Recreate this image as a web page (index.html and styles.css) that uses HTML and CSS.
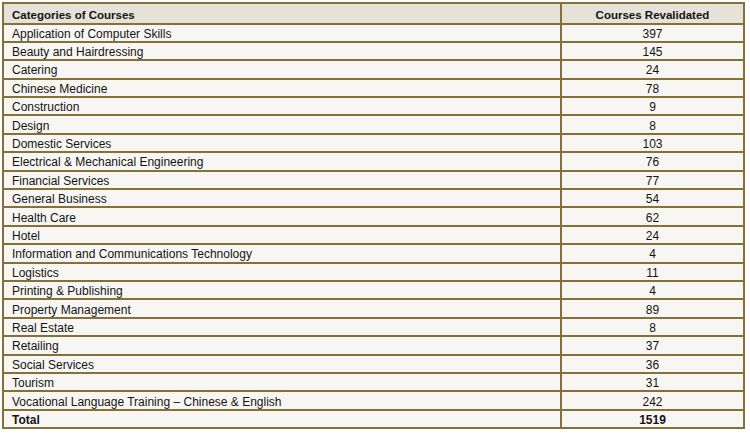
FILE: index.html
```html
<!DOCTYPE html>
<html>
<head>
<meta charset="utf-8">
<link rel="stylesheet" href="styles.css">
</head>
<body>
<table class="courses">
  <thead>
    <tr><th class="cat">Categories of Courses</th><th class="num">Courses Revalidated</th></tr>
  </thead>
  <tbody>
    <tr><td class="cat">Application of Computer Skills</td><td class="num">397</td></tr>
    <tr><td class="cat">Beauty and Hairdressing</td><td class="num">145</td></tr>
    <tr><td class="cat">Catering</td><td class="num">24</td></tr>
    <tr><td class="cat">Chinese Medicine</td><td class="num">78</td></tr>
    <tr><td class="cat">Construction</td><td class="num">9</td></tr>
    <tr><td class="cat">Design</td><td class="num">8</td></tr>
    <tr><td class="cat">Domestic Services</td><td class="num">103</td></tr>
    <tr><td class="cat">Electrical &amp; Mechanical Engineering</td><td class="num">76</td></tr>
    <tr><td class="cat">Financial Services</td><td class="num">77</td></tr>
    <tr><td class="cat">General Business</td><td class="num">54</td></tr>
    <tr><td class="cat">Health Care</td><td class="num">62</td></tr>
    <tr><td class="cat">Hotel</td><td class="num">24</td></tr>
    <tr><td class="cat">Information and Communications Technology</td><td class="num">4</td></tr>
    <tr><td class="cat">Logistics</td><td class="num">11</td></tr>
    <tr><td class="cat">Printing &amp; Publishing</td><td class="num">4</td></tr>
    <tr><td class="cat">Property Management</td><td class="num">89</td></tr>
    <tr><td class="cat">Real Estate</td><td class="num">8</td></tr>
    <tr><td class="cat">Retailing</td><td class="num">37</td></tr>
    <tr><td class="cat">Social Services</td><td class="num">36</td></tr>
    <tr><td class="cat">Tourism</td><td class="num">31</td></tr>
    <tr><td class="cat">Vocational Language Training – Chinese &amp; English</td><td class="num">242</td></tr>
    <tr class="total"><td class="cat">Total</td><td class="num">1519</td></tr>
  </tbody>
</table>
</body>
</html>
```
FILE: styles.css
```css
html, body {
  margin: 0;
  padding: 0;
  background: #ffffff;
}
body {
  padding: 2px 0 0 2px;
  font-family: "Liberation Sans", Arial, sans-serif;
  font-size: 12px;
  color: #141414;
}
.courses {
  border-collapse: collapse;
  width: 743px;
  table-layout: fixed;
  background: #f7f6f2;
}
.courses th,
.courses td {
  border: 2px solid #86703a;
  padding: 3px 8px 0;
  line-height: 13px;
  vertical-align: middle;
}
.courses thead tr {
  height: 20.5px;
}
.courses tbody tr {
  height: 18.4px;
}
.courses thead th {
  background: #e6e2d8;
  font-weight: bold;
  font-size: 11.5px;
  padding-top: 4px;
}
.courses .cat {
  text-align: left;
  width: 540px;
}
.courses .num {
  text-align: center;
}
.courses .total td {
  font-weight: bold;
}
```
